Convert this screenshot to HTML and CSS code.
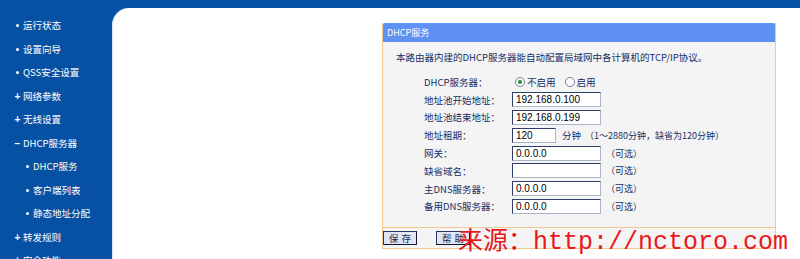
FILE: index.html
```html
<!DOCTYPE html>
<html>
<head>
<meta charset="utf-8">
<link rel="stylesheet" href="styles.css">
</head>
<body>
<div class="layout">
  <ul class="menu">
    <li class="item"><span class="mark dot"></span>运行状态</li>
    <li class="item"><span class="mark dot"></span>设置向导</li>
    <li class="item"><span class="mark dot"></span>QSS安全设置</li>
    <li class="item"><span class="mark plus">+</span>网络参数</li>
    <li class="item"><span class="mark plus">+</span>无线设置</li>
    <li class="item"><span class="mark minus">−</span>DHCP服务器</li>
    <li class="item sub active"><span class="mark dot"></span>DHCP服务</li>
    <li class="item sub"><span class="mark dot"></span>客户端列表</li>
    <li class="item sub"><span class="mark dot"></span>静态地址分配</li>
    <li class="item"><span class="mark plus">+</span>转发规则</li>
    <li class="item"><span class="mark plus">+</span>安全功能</li>
  </ul>
  <div class="main">
    <div class="panel">
      <div class="panel-head">DHCP服务</div>
      <div class="panel-body">
        <p class="desc">本路由器内建的DHCP服务器能自动配置局域网中各计算机的TCP/IP协议。</p>
        <div class="form">
          <div class="row">
            <span class="label">DHCP服务器：</span>
            <span class="field">
              <span class="radio checked"></span><span class="rtext">不启用</span>
              <span class="radio"></span><span class="rtext">启用</span>
            </span>
          </div>
          <div class="row">
            <span class="label">地址池开始地址：</span>
            <span class="field"><span class="input">192.168.0.100</span></span>
          </div>
          <div class="row">
            <span class="label">地址池结束地址：</span>
            <span class="field"><span class="input">192.168.0.199</span></span>
          </div>
          <div class="row">
            <span class="label">地址租期：</span>
            <span class="field"><span class="input short">120</span><span class="unit">分钟</span><span class="hint">（1～2880分钟，缺省为120分钟）</span></span>
          </div>
          <div class="row">
            <span class="label">网关：</span>
            <span class="field"><span class="input">0.0.0.0</span><span class="hint opt">（可选）</span></span>
          </div>
          <div class="row">
            <span class="label">缺省域名：</span>
            <span class="field"><span class="input"></span><span class="hint opt">（可选）</span></span>
          </div>
          <div class="row">
            <span class="label">主DNS服务器：</span>
            <span class="field"><span class="input">0.0.0.0</span><span class="hint opt">（可选）</span></span>
          </div>
          <div class="row">
            <span class="label">备用DNS服务器：</span>
            <span class="field"><span class="input">0.0.0.0</span><span class="hint opt">（可选）</span></span>
          </div>
        </div>
      </div>
      <div class="panel-foot">
        <span class="btn save">保存</span>
        <span class="btn help">帮助</span>
      </div>
    </div>
  </div>
</div>
<div class="watermark">来源：http://nctoro.com</div>
</body>
</html>
```

FILE: styles.css
```css
html, body {
  margin: 0;
  padding: 0;
}
body {
  width: 800px;
  height: 259px;
  overflow: hidden;
  background: #0751a4;
  font-family: "Noto Sans CJK SC", sans-serif;
  position: relative;
}
.layout {
  display: flex;
  height: 259px;
}
.menu {
  list-style: none;
  margin: 0;
  padding: 14px 0 0 0;
  width: 112px;
  flex: none;
}
.item {
  height: 23.5px;
  line-height: 23.5px;
  color: #ffffff;
  font-size: 9.5px;
  display: flex;
  align-items: center;
  padding-left: 12px;
  white-space: nowrap;
}
.item.sub {
  padding-left: 22px;
}
.item.active {
  color: #fffbd8;
}
.mark {
  width: 11px;
  flex: none;
  display: flex;
  align-items: center;
  justify-content: center;
  font-family: "Liberation Sans", sans-serif;
  font-weight: bold;
  font-size: 10px;
}
.mark.dot::before {
  content: "";
  width: 3px;
  height: 3px;
  border-radius: 50%;
  background: #ffffff;
}
.main {
  flex: 1;
  margin-top: 8px;
  background: #ffffff;
  border-top-left-radius: 17px;
  border-left: 1px solid #d6e6f7;
  padding: 15px 0 0 269px;
}
.panel {
  width: 392px;
  border: 1px solid #f3c992;
  border-top: none;
  background: #f4f4f4;
}
.panel-head {
  height: 19px;
  line-height: 19px;
  background: #5f91f3;
  color: #ffffff;
  font-size: 9px;
  padding-left: 4px;
  border-radius: 2px 2px 0 0;
}
.panel-body {
  padding: 5px 0 12px 0;
  border-bottom: 1px solid #f3c992;
}
.desc {
  margin: 0 0 0 13px;
  height: 20px;
  line-height: 20px;
  font-size: 9.5px;
  color: #162f66;
}
.form {
  margin-top: 6px;
  margin-left: 41px;
}
.row {
  display: flex;
  align-items: center;
  height: 17.8px;
}
.label {
  width: 88px;
  flex: none;
  font-size: 9.5px;
  color: #162f66;
  white-space: nowrap;
}
.field {
  display: flex;
  align-items: center;
  font-size: 9.5px;
  color: #162f66;
}
.radio {
  width: 8px;
  height: 8px;
  border: 1px solid #6f7f9a;
  border-radius: 50%;
  background: #ffffff;
  margin-left: 3px;
  margin-right: 2px;
  display: flex;
  align-items: center;
  justify-content: center;
}
.radio.checked::before {
  content: "";
  width: 4px;
  height: 4px;
  border-radius: 50%;
  background: #1f8a3a;
}
.rtext {
  margin-right: 6px;
}
.input {
  width: 84px;
  height: 13px;
  border: 1px solid #2b3f6a;
  border-right-color: #aab4c8;
  border-bottom-color: #aab4c8;
  background: #ffffff;
  font-family: "Liberation Sans", sans-serif;
  font-size: 10px;
  line-height: 13px;
  color: #000000;
  padding-left: 3px;
  box-sizing: content-box;
}
.input.short {
  width: 39px;
}
.unit {
  margin-left: 6px;
}
.hint {
  margin-left: 4px;
  font-size: 9px;
}
.hint.opt {
  margin-left: 5px;
}
.panel-foot {
  height: 20px;
  display: flex;
  align-items: center;
}
.btn {
  height: 12px;
  line-height: 12px;
  border: 1px solid #26365e;
  border-right-color: #101a35;
  border-bottom-color: #101a35;
  background: #dfe5f3;
  color: #17264d;
  font-size: 9.5px;
  letter-spacing: 3px;
  padding: 0 2px 0 5px;
}
.btn.help {
  margin-left: 19px;
}
.watermark {
  position: absolute;
  left: 458px;
  top: 228px;
  color: #e8181c;
  font-family: "Liberation Mono", "Noto Sans CJK SC", monospace;
  font-size: 25px;
  line-height: 30px;
  white-space: nowrap;
}
```
